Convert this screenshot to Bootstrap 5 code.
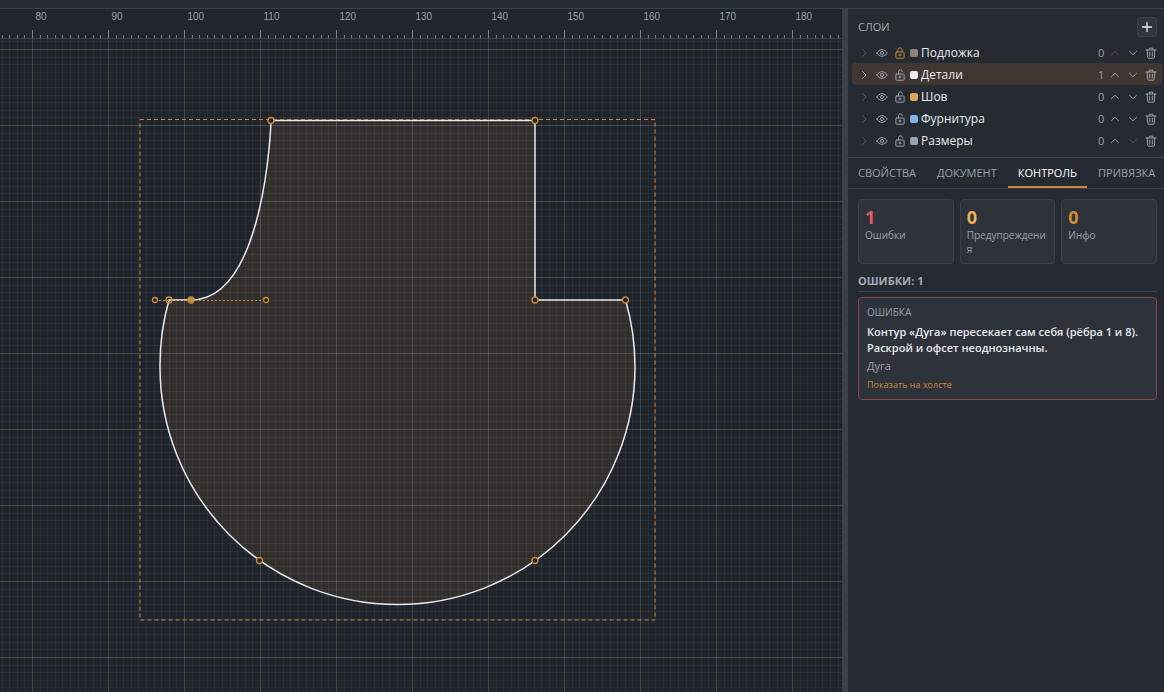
<!DOCTYPE html>
<html lang="ru" data-bs-theme="dark">
<head>
<meta charset="utf-8">
<meta name="viewport" content="width=device-width, initial-scale=1">
<title>Редактор выкроек</title>
<link href="https://cdn.jsdelivr.net/npm/bootstrap@5.3.0/dist/css/bootstrap.min.css" rel="stylesheet">
<style>
:root{--panel:#262a31;--raised:#2e323a;--line:#3b3f49;--muted:#98a0ae;--accent:#cb8a3a}
body{background:var(--panel);color:#e8eaf0;font-family:"Open Sans","Noto Sans",sans-serif;font-size:12px;line-height:16px}
button{font-family:inherit;color:inherit}
.topbar{height:9px;border-bottom:1px solid var(--line)}
.ruler{height:30px;background:#21252c;border-bottom:1px solid var(--line)}
.ruler text{font:10px "Liberation Sans",sans-serif;fill:#98a2b3}
.board{background:#20252c;min-height:0}
.board svg,.ruler svg{display:block;width:100%;height:100%}
.splitter{width:6px;background:var(--line)}
.side{width:316px}
.side-head{height:32px;padding:8px 7px 0 10px}
.side-title{font-size:11px;line-height:20px;color:#a3abb8;font-weight:500}
.add-btn{width:20px;height:20px;background:#30343c;border:1px solid var(--line);border-radius:3px;padding:0}
.layers{padding:0 2px 6px 4px;border-bottom:1px solid var(--line)}
.layer{height:22px;border-radius:4px;padding:1px 2px 0 3px}
.layer.active{background:#413732}
.icon-btn{width:18px;height:18px;padding:0;border:0;background:none;color:#9aa1ae;flex:none}
.icon-btn svg,.add-btn svg{display:block;margin:auto;fill:none;stroke:currentColor;stroke-linecap:round;stroke-linejoin:round}
.icon-btn:disabled{opacity:.35}
.icon-btn.locked{color:#bd823b}
.swatch{width:8px;height:8px;border-radius:2px;margin:0 3px 0 1px;flex:none}
.layer-name{font-size:12px;line-height:20px;font-weight:500}
.count{font-size:11px;color:var(--muted);width:8px}
.tabs{height:31px;border-bottom:1px solid var(--line);gap:1px}
.tab-btn{border:0;border-bottom:2px solid transparent;background:none;color:var(--muted);font-size:11px;padding:2px 10px 0;white-space:nowrap}
.tab-btn.active{color:#fff;border-color:var(--accent);font-weight:500}
.checks{padding:10px 7px 10px 10px}
.tile{background:var(--raised);border:1px solid var(--line);border-radius:4px;flex:1 1 0;min-width:0;min-height:65px;padding:8px 6px 6px;overflow-wrap:anywhere}
.tile-num{font-size:18px;line-height:18px;font-weight:700}
.tile-label{font-size:10px;line-height:14px;color:var(--muted);margin-top:2px}
.group-title{font-size:11px;line-height:16px;font-weight:700;color:#a3abb8;margin:9px 0 5px;padding-bottom:2px;border-bottom:1px solid var(--line)}
.issue{background:var(--raised);border:1px solid #87454b;border-radius:4px;padding:6px 8px}
.issue-kind{font-size:10px;line-height:16px;color:var(--muted)}
.issue-text{font-size:11px;line-height:16px;margin-top:4px;font-weight:600}
.issue-obj{font-size:11px;line-height:16px;color:var(--muted);margin-top:2px}
.issue-link{font-size:9px;line-height:16px;color:var(--accent);text-decoration:none;margin-top:3px;font-weight:500}
</style>
</head>
<body>
<svg class="d-none" aria-hidden="true">
<symbol id="i-right" viewBox="0 0 12 12"><path d="M4.500 2.500 8 6 4.500 9.500"/></symbol>
<symbol id="i-up" viewBox="0 0 12 12"><path d="M2.500 7.700 6 4.300 9.500 7.700"/></symbol>
<symbol id="i-down" viewBox="0 0 12 12"><path d="M2.500 4.300 6 7.700 9.500 4.300"/></symbol>
<symbol id="i-eye" viewBox="0 0 12 12"><path d="M.8 6C2 4.200 3.800 2.700 6 2.700S10 4.200 11.200 6C10 7.800 8.200 9.300 6 9.300S2 7.800.8 6Z"/><circle cx="6" cy="6" r="1.600"/></symbol>
<symbol id="i-lock" viewBox="0 0 12 12"><rect x="1.900" y="5" width="8.200" height="6.200" rx=".8"/><path d="M3.900 5V2.900a2.100 2.100 0 0 1 4.200 0V5M6 7v2M5 8h2"/></symbol>
<symbol id="i-open" viewBox="0 0 12 12"><rect x="1.900" y="5" width="8.200" height="6.200" rx=".8"/><path d="M4.500 5V2.700a1.900 1.900 0 0 1 3.800 0M6 7v2M5 8h2"/></symbol>
<symbol id="i-trash" viewBox="0 0 12 12"><path d="M1 3h10M4.200 2.800V1.200h3.600v1.600M2.200 3l.5 7.200q.1 1 1 1h4.600q.9 0 1-1L9.800 3M4.700 5.200v3.900M7.300 5.200v3.900"/></symbol>
</svg>
<div class="vh-100 d-flex flex-column overflow-hidden">
  <header class="topbar flex-shrink-0"></header>
  <div class="d-flex flex-grow-1" style="min-height:0">
    <main class="flex-grow-1 d-flex flex-column overflow-hidden">
      <div class="ruler flex-shrink-0"><svg id="ruler"></svg></div>
      <div class="board flex-grow-1">
        <svg role="img" aria-label="Контур детали">
          <g id="grid"></g>
          <g transform="translate(0 -39)">
            <path d="M271 120.500H535V300H625.500A237.500 237.500 0 0 1 635 367A237.500 237.500 0 0 1 160 367A237.500 237.500 0 0 1 169 300H191C266 300 271 120.500 271 120.500Z" fill="#cb8a3a" fill-opacity=".11" stroke="#e8eaf0" stroke-width="1.500"/>
            <path d="M140 119.500H655V620H140Z" fill="none" stroke="#cb8a3a" stroke-dasharray="4 3"/>
            <path d="M155 300.500H266" stroke="#cb8a3a" stroke-dasharray="2 2"/>
            <g fill="#20252c" stroke="#cb8a3a" stroke-width="1.300">
              <circle cx="271" cy="120.500" r="3"/><circle cx="535" cy="120.500" r="3"/><circle cx="535" cy="300" r="3"/><circle cx="625.500" cy="300" r="3"/><circle cx="535" cy="560.500" r="3"/><circle cx="259.500" cy="560.500" r="3"/><circle cx="169" cy="300" r="3" fill="none"/>
              <circle cx="155" cy="300" r="2.500"/><circle cx="266" cy="300" r="2.500"/><circle cx="191" cy="300" r="3" fill="#cb8a3a"/>
            </g>
          </g>
        </svg>
      </div>
    </main>
    <div class="splitter flex-shrink-0"></div>
    <aside class="side flex-shrink-0">
      <div class="side-head d-flex justify-content-between">
        <h2 class="side-title m-0">СЛОИ</h2>
        <button class="add-btn" aria-label="Добавить слой"><svg width="12" height="12" viewBox="0 0 12 12"><path d="M6 1.500v9M1.500 6h9" stroke-width="1.300"/></svg></button>
      </div>
      <div class="layers" id="layers"></div>
      <div class="tabs d-flex" role="tablist">
        <button class="tab-btn" role="tab">СВОЙСТВА</button><button class="tab-btn" role="tab">ДОКУМЕНТ</button><button class="tab-btn active" role="tab" aria-selected="true">КОНТРОЛЬ</button><button class="tab-btn" role="tab">ПРИВЯЗКА</button>
      </div>
      <section class="checks">
        <div class="d-flex" style="gap:6px">
          <div class="tile"><div class="tile-num" style="color:#e35b5f">1</div><div class="tile-label">Ошибки</div></div>
          <div class="tile"><div class="tile-num" style="color:#eab157">0</div><div class="tile-label">Предупреждения</div></div>
          <div class="tile"><div class="tile-num" style="color:#cb8a3a">0</div><div class="tile-label">Инфо</div></div>
        </div>
        <h3 class="group-title">ОШИБКИ: 1</h3>
        <article class="issue">
          <div class="issue-kind">ОШИБКА</div>
          <div class="issue-text">Контур «Дуга» пересекает сам себя (рёбра 1 и 8). Раскрой и офсет неоднозначны.</div>
          <div class="issue-obj">Дуга</div>
          <a class="issue-link d-block" href="#">Показать на холсте</a>
        </article>
      </section>
    </aside>
  </div>
</div>
<script src="https://cdn.jsdelivr.net/npm/bootstrap@5.3.0/dist/js/bootstrap.bundle.min.js"></script>
<script>
const icon = (n, s = 12) => `<svg width="${s}" height="${s}"><use href="#i-${n}"/></svg>`;
const layers = [['Подложка','#908377',0,true],['Детали','#e8eaf0',1],['Шов','#e0a458',0],['Фурнитура','#7fb2e5',0],['Размеры','#9aa3b2',0]];
document.getElementById('layers').innerHTML = layers.map(([name, color, n, locked], i) => `
<div class="layer d-flex align-items-center ${n ? 'active' : ''}">
<button class="icon-btn" aria-label="Раскрыть" ${n ? '' : 'disabled'}>${icon('right')}</button>
<button class="icon-btn" aria-label="Видимость">${icon('eye')}</button>
<button class="icon-btn ${locked ? 'locked' : ''}" aria-label="Блокировка">${icon(locked ? 'lock' : 'open')}</button>
<span class="swatch" style="background:${color}"></span><span class="layer-name flex-grow-1">${name}</span>
<span class="count">${n}</span>
<button class="icon-btn" aria-label="Выше" ${i ? '' : 'disabled'}>${icon('up')}</button>
<button class="icon-btn" aria-label="Ниже" ${i < 4 ? '' : 'disabled'}>${icon('down')}</button>
<button class="icon-btn" aria-label="Удалить">${icon('trash')}</button>
</div>`).join('');

// Ten millimetres take 76 px; the line for 80 mm is at x = 32.
const step = 7.6;
function draw() {
  const board = document.querySelector('.board');
  const W = board.clientWidth, H = board.clientHeight;
  let minor = '', major = '', ticks = '', labels = '';
  for (let i = -4; 32 + i * step < W; i++) {
    const x = Math.round(32 + i * step) + .5, big = i % 10 === 0;
    if (big) {
      major += `M${x} 0V${H}`;
      if (x + 22 < W) labels += `<text x="${x + 3}" y="11">${80 + i}</text>`;
    } else minor += `M${x} 0V${H}`;
    ticks += `M${x} ${big ? 21 : 26}V29`;
  }
  for (let j = -1; 10 + j * step < H; j++) {
    const y = Math.round(10 + j * step) + .5;
    if (j % 10 === 0) major += `M0 ${y}H${W}`; else minor += `M0 ${y}H${W}`;
  }
  document.getElementById('grid').innerHTML = `<path d="${minor}" stroke="#fff" stroke-opacity=".045"/><path d="${major}" stroke="#fff" stroke-opacity=".16"/>`;
  document.getElementById('ruler').innerHTML = `<path d="${ticks}" stroke="#7a808c"/>${labels}`;
}
draw();
addEventListener('resize', draw);
</script>
</body>
</html>
